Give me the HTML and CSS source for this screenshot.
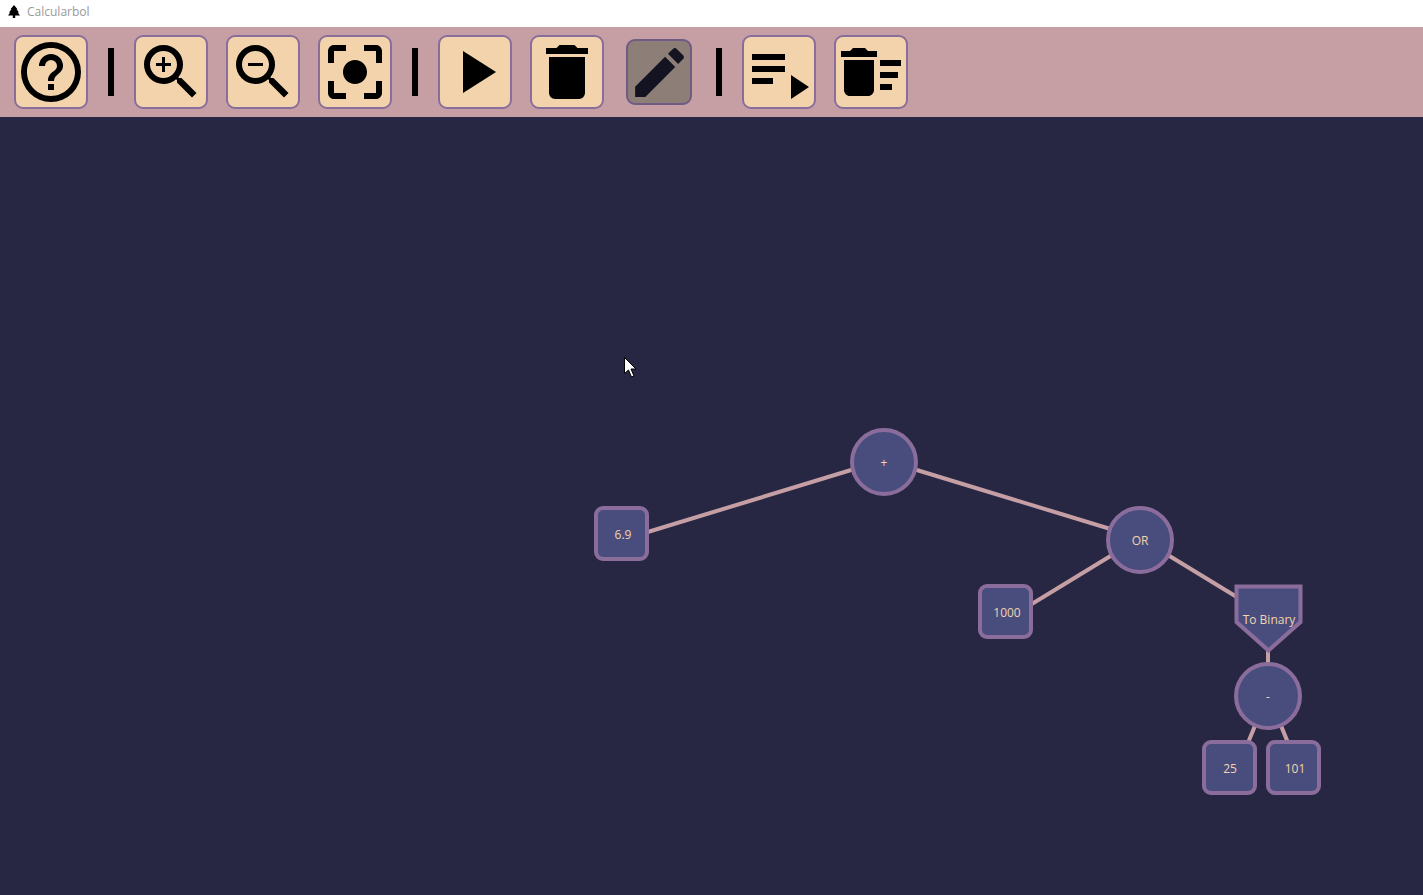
FILE: index.html
```html
<!DOCTYPE html>
<html lang="en">
<head>
<meta charset="utf-8">
<title>Calcularbol</title>
<link rel="stylesheet" href="styles.css">
</head>
<body>
<header class="titlebar">
  <svg class="app-icon" viewBox="0 0 12 13" aria-hidden="true"><path d="M6 0L9.5 4.2H8.6L11 7.4H9.8L12 10.6H7.2V13H4.8V10.6H0L2.2 7.4H1L3.4 4.2H2.5Z"/></svg>
  <h1 class="app-title">Calcularbol</h1>
</header>
<nav class="toolbar" aria-label="Tools">
  <div class="group">
    <button class="tool" type="button" aria-label="Help"><svg viewBox="0 0 24 24"><path d="M11,18H13V16H11V18M12,2A10,10 0 0,0 2,12A10,10 0 0,0 12,22A10,10 0 0,0 22,12A10,10 0 0,0 12,2M12,20C7.59,20 4,16.41 4,12C4,7.59 7.59,4 12,4C16.41,4 20,7.59 20,12C20,16.41 16.41,20 12,20M12,6A4,4 0 0,0 8,10H10A2,2 0 0,1 12,8A2,2 0 0,1 14,10C14,12 11,11.75 11,15H13C13,12.75 16,12.5 16,10A4,4 0 0,0 12,6Z"/></svg></button>
  </div>
  <span class="separator"></span>
  <div class="group">
    <button class="tool" type="button" aria-label="Zoom in"><svg viewBox="0 0 24 24"><path d="M15.5,14L20.5,19L19,20.5L14,15.5V14.71L13.73,14.43C12.59,15.41 11.11,16 9.5,16A6.5,6.5 0 0,1 3,9.5A6.5,6.5 0 0,1 9.5,3A6.5,6.5 0 0,1 16,9.5C16,11.11 15.41,12.59 14.43,13.73L14.71,14H15.5M9.5,14C12,14 14,12 14,9.5C14,7 12,5 9.5,5C7,5 5,7 5,9.5C5,12 7,14 9.5,14M12,10H10V12H9V10H7V9H9V7H10V9H12V10Z"/></svg></button>
    <button class="tool" type="button" aria-label="Zoom out"><svg viewBox="0 0 24 24"><path d="M15.5,14L20.5,19L19,20.5L14,15.5V14.71L13.73,14.43C12.59,15.41 11.11,16 9.5,16A6.5,6.5 0 0,1 3,9.5A6.5,6.5 0 0,1 9.5,3A6.5,6.5 0 0,1 16,9.5C16,11.11 15.41,12.59 14.43,13.73L14.71,14H15.5M9.5,14C12,14 14,12 14,9.5C14,7 12,5 9.5,5C7,5 5,7 5,9.5C5,12 7,14 9.5,14M7,9H12V10H7V9Z"/></svg></button>
    <button class="tool" type="button" aria-label="Center view"><svg viewBox="0 0 24 24"><path d="M12 8c-2.21 0-4 1.79-4 4s1.79 4 4 4 4-1.79 4-4-1.79-4-4-4zm-7 7H3v4c0 1.1.9 2 2 2h4v-2H5v-4zM5 5h4V3H5c-1.1 0-2 .9-2 2v4h2V5zm14-2h-4v2h4v4h2V5c0-1.1-.9-2-2-2zm0 16h-4v2h4c1.1 0 2-.9 2-2v-4h-2v4z"/></svg></button>
  </div>
  <span class="separator"></span>
  <div class="group">
    <button class="tool" type="button" aria-label="Run"><svg viewBox="0 0 24 24"><path d="M8 5V19L19 12Z"/></svg></button>
    <button class="tool" type="button" aria-label="Delete"><svg viewBox="0 0 24 24"><path d="M19,4H15.5L14.5,3H9.5L8.5,4H5V6H19M6,19A2,2 0 0,0 8,21H16A2,2 0 0,0 18,19V7H6V19Z"/></svg></button>
    <button class="tool" type="button" aria-label="Edit" disabled><svg viewBox="0 0 24 24"><path d="M20.71,7.04C21.1,6.65 21.1,6 20.71,5.63L18.37,3.29C18,2.9 17.35,2.9 16.96,3.29L15.12,5.12L18.87,8.87M3,17.25V21H6.75L17.81,9.93L14.06,6.18L3,17.25Z"/></svg></button>
  </div>
  <span class="separator"></span>
  <div class="group">
    <button class="tool" type="button" aria-label="Run all"><svg viewBox="0 0 24 24"><path d="M3 6H14V8H3ZM3 10H14V12H3ZM3 14H10V16H3ZM16 13V21L22 17Z"/></svg></button>
    <button class="tool" type="button" aria-label="Delete all"><svg viewBox="0 0 24 24"><path d="M15 16h4v2h-4zM15 8h7v2h-7zM15 12h6v2h-6zM3 18c0 1.1.9 2 2 2h6c1.1 0 2-.9 2-2V8H3v10zM14 5h-3l-1-1H6L5 5H2v2h12z"/></svg></button>
  </div>
</nav>
<main class="workspace">
  <svg class="tree" aria-label="Expression tree">
    <g class="edges">
      <line x1="884" y1="343" x2="628" y2="421"/>
      <line x1="884" y1="343" x2="1140" y2="421"/>
      <line x1="1140" y1="421" x2="1012" y2="499"/>
      <line x1="1140" y1="421" x2="1268" y2="499"/>
      <line x1="1268" y1="499" x2="1268" y2="577"/>
      <line x1="1268" y1="577" x2="1236" y2="655"/>
      <line x1="1268" y1="577" x2="1300" y2="655"/>
    </g>
    <g class="shapes">
      <circle cx="884" cy="345" r="32"/>
      <circle cx="1140" cy="423" r="32"/>
      <circle cx="1268" cy="579" r="32"/>
      <rect x="596" y="391" width="51" height="51" rx="7"/>
      <rect x="980" y="469" width="51" height="51" rx="7"/>
      <rect x="1204" y="625" width="51" height="51" rx="7"/>
      <rect x="1268" y="625" width="51" height="51" rx="7"/>
      <path d="M1236.5 469.5H1300.5V505L1268.5 533.5L1236.5 505Z"/>
    </g>
    <g class="labels">
      <text x="884" y="350">+</text>
      <text x="623" y="422">6.9</text>
      <text x="1140" y="428">OR</text>
      <text x="1007" y="500">1000</text>
      <text x="1269" y="507">To Binary</text>
      <text x="1268" y="584">-</text>
      <text x="1230" y="656">25</text>
      <text x="1295" y="656">101</text>
    </g>
    <path class="pointer" d="M624.5 240.5V256.5L628.5 253L631.5 260L634 259L631 252H636Z"/>
  </svg>
</main>
</body>
</html>
```
FILE: styles.css
```css
* {
  box-sizing: border-box;
}

body {
  margin: 0;
  min-height: 100vh;
  display: flex;
  flex-direction: column;
  background: #272744;
  font-family: "Segoe UI", "Open Sans", "Noto Sans", sans-serif;
  font-size: 12px;
}

.titlebar {
  display: flex;
  align-items: center;
  gap: 7px;
  height: 27px;
  padding: 0 8px 4px;
  background: #fff;
}

.app-icon {
  width: 12px;
  height: 13px;
}

.app-title {
  margin: 0;
  font-size: 12px;
  font-weight: 400;
  line-height: 16px;
  color: #999;
}

.toolbar {
  display: flex;
  align-items: center;
  gap: 20px;
  padding: 8px 14px;
  background: #c69fa5;
}

.group {
  display: flex;
  gap: 18px;
}

.separator {
  width: 6px;
  height: 48px;
  background: #000;
}

.tool {
  display: flex;
  align-items: center;
  justify-content: center;
  width: 74px;
  height: 74px;
  padding: 0;
  border: 2px solid #8b6d9c;
  border-radius: 9px;
  background: #f2d3ab;
  color: #000;
}

.tool svg {
  flex: none;
  width: 72px;
  height: 72px;
  fill: currentColor;
}

.tool:disabled {
  width: 66px;
  height: 66px;
  margin: 4px;
  border-color: #705b84;
  background: #8d7e78;
  color: #131322;
}

.tool:disabled svg {
  width: 65px;
  height: 65px;
}

.workspace {
  flex: 1;
  display: flex;
}

.tree {
  flex: 1;
  min-width: 0;
}

.edges {
  stroke: #c69fa5;
  stroke-width: 4;
}

.shapes {
  fill: #494d7e;
  stroke: #8b6d9c;
  stroke-width: 4;
}

.labels {
  fill: #f2d3ab;
  text-anchor: middle;
}

.pointer {
  fill: #fff;
  stroke: #000;
  stroke-width: 1;
}
```
